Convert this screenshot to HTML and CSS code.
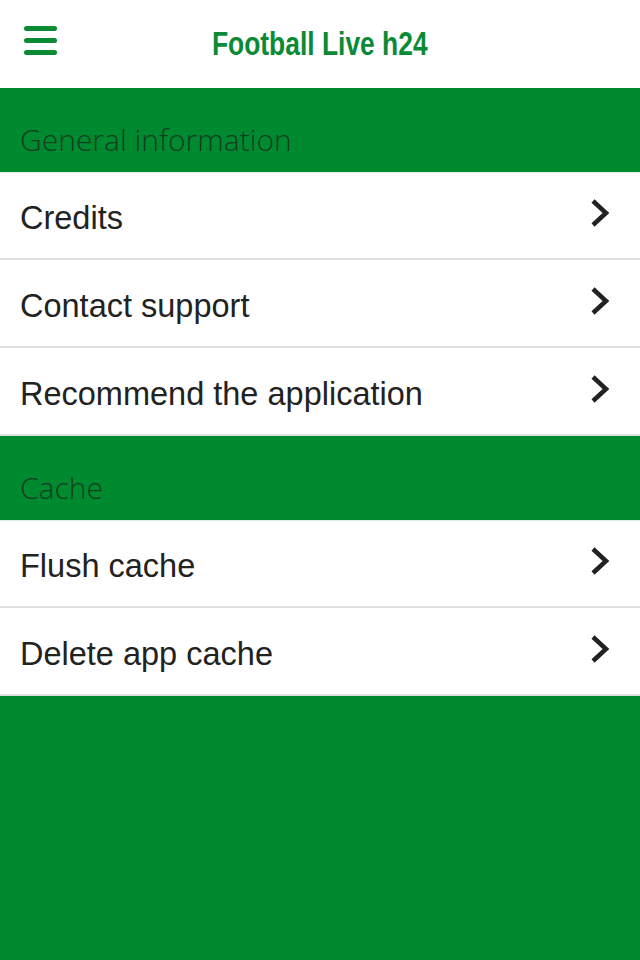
FILE: index.html
```html
<!DOCTYPE html>
<html lang="en">
<head>
    <meta charset="UTF-8">
    <meta name="viewport" content="width=device-width, initial-scale=1.0">
    <title>Football Live h24</title>
    <link rel="stylesheet" href="styles.css">
</head>
<body>
    <div class="header">
        <div class="menu-btn">
            <span></span>
            <span></span>
            <span></span>
        </div>
        <h1>Football Live h24</h1>
    </div>

    <div class="section">General information</div>
    <div class="list">
        <div class="row">
            <span>Credits</span>
            <svg class="chevron" width="20" height="30" viewBox="0 0 20 30"><polyline points="3,3 16,15 3,27" /></svg>
        </div>
        <div class="row">
            <span>Contact support</span>
            <svg class="chevron" width="20" height="30" viewBox="0 0 20 30"><polyline points="3,3 16,15 3,27" /></svg>
        </div>
        <div class="row">
            <span>Recommend the application</span>
            <svg class="chevron" width="20" height="30" viewBox="0 0 20 30"><polyline points="3,3 16,15 3,27" /></svg>
        </div>
    </div>

    <div class="section">Cache</div>
    <div class="list">
        <div class="row">
            <span>Flush cache</span>
            <svg class="chevron" width="20" height="30" viewBox="0 0 20 30"><polyline points="3,3 16,15 3,27" /></svg>
        </div>
        <div class="row">
            <span>Delete app cache</span>
            <svg class="chevron" width="20" height="30" viewBox="0 0 20 30"><polyline points="3,3 16,15 3,27" /></svg>
        </div>
    </div>
</body>
</html>
```

FILE: styles.css
```css
body {
    margin: 0;
    padding: 0;
    background-color: #008a30;
    font-family: 'Liberation Sans', Arial, sans-serif;
    height: 960px;
    overflow: hidden;
}
.header {
    height: 88px;
    background-color: #fff;
    display: flex;
    align-items: center;
    justify-content: center;
    position: relative;
}
h1 {
    margin: 0;
    font-family: 'Liberation Sans', Arial, sans-serif;
    font-weight: bold;
    font-size: 33px;
    color: #0b8a35;
    transform: scaleX(0.8); /* no condensed face installed */
}
/* hamburger sits over the header, left side */
.menu-btn {
    position: absolute;
    left: 24px;
    top: 26px;
    width: 33px;
    display: flex;
    flex-direction: column;
    gap: 7px;
}
.menu-btn span {
    display: block;
    height: 5px;
    border-radius: 3px;
    background-color: #0b8a35;
}
.section {
    height: 84px;
    box-sizing: border-box;
    padding: 35px 20px 0;
    line-height: 34px;
    font-family: 'Open Sans', sans-serif;
    font-weight: 300;
    font-size: 30px;
    color: #153d1e;
}
.list {
    background-color: #fff;
    box-shadow: inset 0 1px 0 #dcefe2;
}
.row {
    height: 88px;
    box-sizing: border-box;
    border-bottom: 2px solid #e0e0e0;
    padding: 6px 30px 0 20px;
    display: flex;
    align-items: center;
    justify-content: space-between;
    font-size: 32.5px;
    color: #222;
}
.chevron {
    margin-top: -10px;
}
.chevron polyline {
    fill: none;
    stroke: #222;
    stroke-width: 4.5;
}
```
